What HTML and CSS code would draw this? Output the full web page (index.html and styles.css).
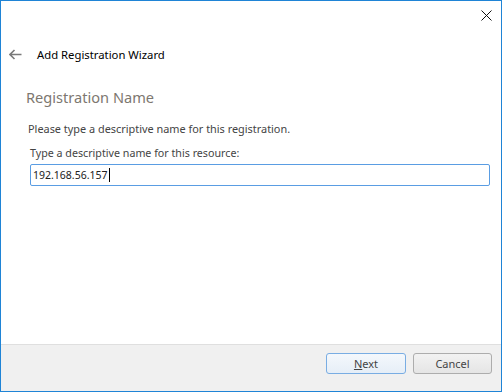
FILE: index.html
```html
<!DOCTYPE html>
<html>
<head>
    <title>Add Registration Wizard</title>
    <link rel="stylesheet" href="styles.css">
</head>
<body>
    <div class="window">
        <!-- Title bar with close button -->
        <div class="titlebar">
            <span class="close">
                <svg width="11" height="11" viewBox="0 0 11 11"><path d="M0.5 0.5L10.5 10.5M10.5 0.5L0.5 10.5" stroke="#111" stroke-width="1"/></svg>
            </span>
        </div>

        <div class="header">
            <span class="back">
                <svg width="13" height="11" viewBox="0 0 13 11"><path d="M1 5.5H12.5M5.5 1L1 5.5L5.5 10" stroke="#7a7a7a" stroke-width="1.6" fill="none"/></svg>
            </span>
            <span class="wizard-title">Add Registration Wizard</span>
        </div>

        <div class="content">
            <h2 class="page-title">Registration Name</h2>
            <p class="hint">Please type a descriptive name for this registration.</p>
            <label class="field-label" for="resName">Type a descriptive name for this resource:</label>
            <div class="input-box">
                <span id="resName" class="input-text">192.168.56.157</span><span class="caret"></span>
            </div>
        </div>

        <div class="footer">
            <button class="btn btn-default"><u>N</u>ext</button>
            <button class="btn">Cancel</button>
        </div>
    </div>
</body>
</html>
```

FILE: styles.css
```css
body {
    margin: 0;
    font-family: "Noto Sans", "Open Sans", sans-serif;
    font-size: 12px;
    color: #1e1e1e;
}

.window {
    width: 502px;
    height: 392px;
    box-sizing: border-box;
    border: 1px solid #1f84d6;
    display: flex;
    flex-direction: column;
    background: #fff;
}

.titlebar {
    height: 30px;
    display: flex;
    justify-content: flex-end;
    align-items: center;
    padding-right: 9px;
}

.close {
    display: flex;
    margin-top: -2px;
}

.header {
    display: flex;
    align-items: center;
    height: 24px;
    margin-top: 11px;
}

.back {
    display: flex;
    margin-left: 8px;
    width: 28px;
}

.wizard-title {
    font-size: 11.3px;
    color: #000;
}

.content {
    padding: 19px 11px 0 25px;
    flex: 1;
}

.page-title {
    margin: 0;
    font-size: 14.6px;
    font-weight: normal;
    color: #7d7770;
    height: 24px;
    line-height: 24px;
}

.hint {
    margin: 12px 0 0 2px;
    font-size: 10.9px;
    color: #444;
    line-height: 16px;
}

.field-label {
    display: block;
    margin: 8px 0 0 4px;
    font-size: 10.7px;
    color: #444;
    line-height: 16px;
}

.input-box {
    margin: 3px 0 0 4px;
    height: 22px;
    box-sizing: border-box;
    border: 1px solid #5a9de3;
    border-radius: 2px;
    display: flex;
    align-items: center;
    padding-left: 2px;
}

.input-text {
    font-size: 10.5px;
    color: #222;
}

.caret {
    display: inline-block;
    width: 1px;
    height: 14px;
    background: #000;
    margin-left: 1px;
}

.footer {
    height: 38px;
    border-top: 1px solid #dfdfdf;
    background: #f0f0f0;
    display: flex;
    justify-content: flex-end;
    align-items: flex-start;
    gap: 7px;
    padding: 8px 9px 0 0;
}

.btn {
    width: 79px;
    height: 21px;
    box-sizing: border-box;
    border: 1px solid #adadad;
    border-radius: 3px;
    background: linear-gradient(#f2f2f2, #e5e5e5);
    font-family: "Noto Sans", "Open Sans", sans-serif;
    font-size: 11px;
    color: #444;
    padding: 0;
}

.btn-default {
    width: 80px;
    border-color: #79ade3;
    background: linear-gradient(#f4f8fc, #e6eef7);
}

.btn u {
    text-decoration-thickness: 1px;
}
```
